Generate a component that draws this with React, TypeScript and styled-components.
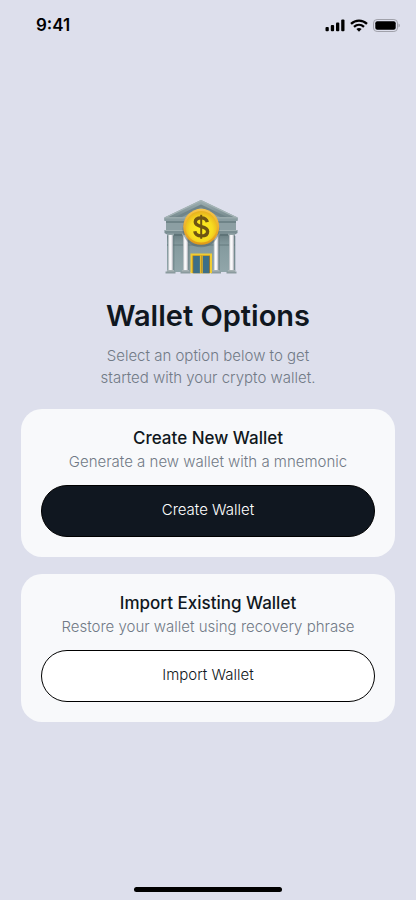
import React from "react";
import styled, { createGlobalStyle } from "styled-components";

const GlobalStyle = createGlobalStyle`
  * { box-sizing: border-box; }
  body {
    margin: 0;
    background: #dddfec;
    color: #101720;
    font-family: "Inter", sans-serif;
  }
  h1, h2, p { margin: 0; }
`;

const Screen = styled.div`
  min-height: 100vh;
  display: flex;
  flex-direction: column;
`;

const StatusBar = styled.header`
  height: 50px;
  padding: 0 16px 0 36px;
  display: flex;
  align-items: center;
  justify-content: space-between;
  color: #000;
`;

const Time = styled.time`
  font-size: 17px;
  line-height: 20px;
  font-weight: 600;
`;

const StatusIcons = styled.svg`
  display: block;
  width: 76px;
  height: 14px;
`;

const Content = styled.main`
  flex: 1;
  padding: 0 21px;
  display: flex;
  flex-direction: column;
  justify-content: center;
`;

const Intro = styled.section`
  display: flex;
  flex-direction: column;
  align-items: center;
  text-align: center;
  margin-bottom: 20px;
`;

const BankArt = styled.svg`
  width: 76px;
  height: 76px;
  margin: 0 14px 22px 0;
`;

const Heading = styled.h1`
  font-size: 29px;
  line-height: 36px;
  font-weight: 600;
  margin-bottom: 11px;
`;

const Lead = styled.p`
  max-width: 240px;
  font-size: 15px;
  line-height: 22px;
  font-weight: 300;
  color: #717a86;
`;

const Options = styled.div`
  display: flex;
  flex-direction: column;
  gap: 17px;
`;

const Card = styled.section`
  padding: 17px 20px 20px;
  border-radius: 21px;
  background: #f8f9fb;
  text-align: center;
`;

const CardTitle = styled.h2`
  font-size: 17px;
  line-height: 24px;
  font-weight: 500;
`;

const CardText = styled.p`
  margin-bottom: 11px;
  font-size: 15px;
  line-height: 24px;
  font-weight: 300;
  color: #717a86;
`;

const ActionButton = styled.button<{ $filled?: boolean }>`
  display: block;
  width: 100%;
  height: 52px;
  padding: 0 16px 4px;
  border: 1px solid #000;
  border-radius: 26px;
  background: ${(p) => (p.$filled ? "#101720" : "#fff")};
  color: ${(p) => (p.$filled ? "#fff" : "#101720")};
  font-family: inherit;
  font-size: 15px;
  font-weight: 300;
  cursor: pointer;
`;

const Footer = styled.footer`
  height: 28px;
  padding-bottom: 8px;
  display: flex;
  align-items: flex-end;
  justify-content: center;
`;

const HomeIndicator = styled.div`
  width: 148px;
  height: 5px;
  border-radius: 3px;
  background: #000;
`;

const Status = () => (
  <StatusIcons viewBox="0 0 76 14" role="img" aria-label="Signal, Wi-Fi and battery">
    <rect x="1.5" y="9" width="3.3" height="4.2" rx="1" />
    <rect x="6.8" y="7" width="3.3" height="6.2" rx="1" />
    <rect x="12" y="4.5" width="3.3" height="8.7" rx="1" />
    <rect x="17.2" y="1.6" width="3.3" height="11.6" rx="1" />
    <g fill="none" stroke="#000" strokeWidth="2.3">
      <path d="M27 5.8C31.5 1.5 38.5 1.5 43 5.8" />
      <path d="M30 8.9C33 6.2 37 6.2 40 8.9" />
    </g>
    <path d="M32.4 11q2.6-2 5.2 0L35 13.7z" />
    <rect x="49.5" y="1.5" width="24" height="12" rx="3.6" fill="none" stroke="#a0a1aa" />
    <rect x="51.3" y="3.2" width="20.4" height="8.6" rx="2" />
    <path d="M74.5 5.6v4q1.4-.5 1.4-2t-1.4-2z" fill="#a0a1aa" />
  </StatusIcons>
);

const Bank = () => (
  <BankArt viewBox="0 0 76 76" role="img" aria-label="Bank">
    <defs>
      <linearGradient id="stone" x1="0" y1="0" x2="0" y2="1">
        <stop offset="0" stopColor="#9eafb2" />
        <stop offset="1" stopColor="#718589" />
      </linearGradient>
      <linearGradient id="wall" x1="0" y1="0" x2="0" y2="1">
        <stop offset="0" stopColor="#627579" />
        <stop offset=".35" stopColor="#849a9e" />
        <stop offset="1" stopColor="#91a6aa" />
      </linearGradient>
      <linearGradient id="column" x1="0" y1="0" x2="1" y2="0">
        <stop offset="0" stopColor="#aeb4ba" />
        <stop offset=".35" stopColor="#fff" />
        <stop offset=".65" stopColor="#f3f2f5" />
        <stop offset="1" stopColor="#a5a9b0" />
      </linearGradient>
      <radialGradient id="coin" cx=".5" cy=".58" r=".55">
        <stop offset="0" stopColor="#fff01e" />
        <stop offset=".65" stopColor="#f7dc20" />
        <stop offset="1" stopColor="#e9b51f" />
      </radialGradient>
      <linearGradient id="rim" x1="0" y1="0" x2="0" y2="1">
        <stop offset="0" stopColor="#f8c64a" />
        <stop offset="1" stopColor="#e19a16" />
      </linearGradient>
    </defs>
    <rect x="4" y="30" width="68" height="42" fill="url(#wall)" />
    <path d="M4 45h68" stroke="#6f8589" strokeWidth="1.4" />
    <path d="M38 0L74.5 17.5v3h-73v-3z" fill="url(#stone)" />
    <path d="M38 4.5L64 17H12z" fill="#71858a" />
    <path d="M38 7.5L57 17H19z" fill="#899da1" />
    <path d="M38 .6L2.5 17.6M38 .6L73.5 17.6" stroke="#a5b4b6" strokeWidth="1.2" />
    <path d="M1.5 17.5h73v3.5h-73z" fill="#8a9da1" />
    <path d="M2 17.8h72" stroke="#a5b4b6" />
    <path d="M3 21h70v9H3z" fill="#8c9fa3" />
    <path d="M3 22h70" stroke="#667b7f" strokeWidth="1.6" />
    <path d="M1.5 30h73v3l-2 1.2h-69l-2-1.2z" fill="#7a8e92" />
    <path d="M2 30.5h72" stroke="#9fafb1" />
    <path d="M5 35h66" stroke="#5f7478" strokeWidth="1.8" />
    {[4.5, 19.5, 50, 65.5].map((x) => (
      <g key={x}>
        <path d={`M${x + 5} 36h2v35h-2z`} fill="#61777c" opacity=".5" />
        <rect x={x - 0.5} y="33.5" width="7" height="2" fill="#93a4a7" />
        <rect x={x + 0.6} y="35" width="4.9" height="36" fill="url(#column)" />
        <rect x={x - 0.6} y="70" width="7.2" height="2" fill="#a8b3b5" />
        <rect x={x - 2} y="71.5" width="10" height="2" fill="#8b9b9e" />
      </g>
    ))}
    <rect x="27.5" y="53.5" width="21.5" height="19.7" fill="#f0cc32" />
    <rect x="29.5" y="55.5" width="17.5" height="17.7" fill="#a47923" />
    <rect x="30.3" y="56" width="6.7" height="17.2" fill="#3d6f87" />
    <rect x="39.5" y="56" width="6.7" height="17.2" fill="#3d6f87" />
    <path d="M37.4 55.5v17.7M39.1 55.5v17.7" stroke="#edc631" strokeWidth="1" />
    <ellipse cx="38" cy="29" rx="18.5" ry="18.3" fill="#53666a" opacity=".5" />
    <circle cx="38.2" cy="26.8" r="18" fill="url(#rim)" />
    <circle cx="38.2" cy="26.8" r="15.8" fill="url(#coin)" />
    <g fill="none" stroke="#6e5413">
      <path d="M38.2 14.8v24" strokeWidth="2" />
      <path
        d="M44.3 22.2c-.6-3-2.8-4.3-6.2-4.3-3.5 0-5.8 1.5-5.8 4.2 0 2.9 2.7 3.7 6 4.5 3.6.9 6.3 1.8 6.3 4.8 0 2.9-2.4 4.5-6.3 4.5-3.7 0-6-1.6-6.5-4.7"
        strokeWidth="3.4"
      />
    </g>
  </BankArt>
);

const options = [
  {
    title: "Create New Wallet",
    text: "Generate a new wallet with a mnemonic",
    action: "Create Wallet",
    filled: true,
  },
  {
    title: "Import Existing Wallet",
    text: "Restore your wallet using recovery phrase",
    action: "Import Wallet",
    filled: false,
  },
];

export default function App() {
  return (
    <Screen>
      <GlobalStyle />
      <StatusBar>
        <Time>9:41</Time>
        <Status />
      </StatusBar>
      <Content>
        <Intro>
          <Bank />
          <Heading>Wallet Options</Heading>
          <Lead>Select an option below to get started with your crypto wallet.</Lead>
        </Intro>
        <Options>
          {options.map((o) => (
            <Card key={o.title}>
              <CardTitle>{o.title}</CardTitle>
              <CardText>{o.text}</CardText>
              <ActionButton type="button" $filled={o.filled}>
                {o.action}
              </ActionButton>
            </Card>
          ))}
        </Options>
      </Content>
      <Footer>
        <HomeIndicator />
      </Footer>
    </Screen>
  );
}
